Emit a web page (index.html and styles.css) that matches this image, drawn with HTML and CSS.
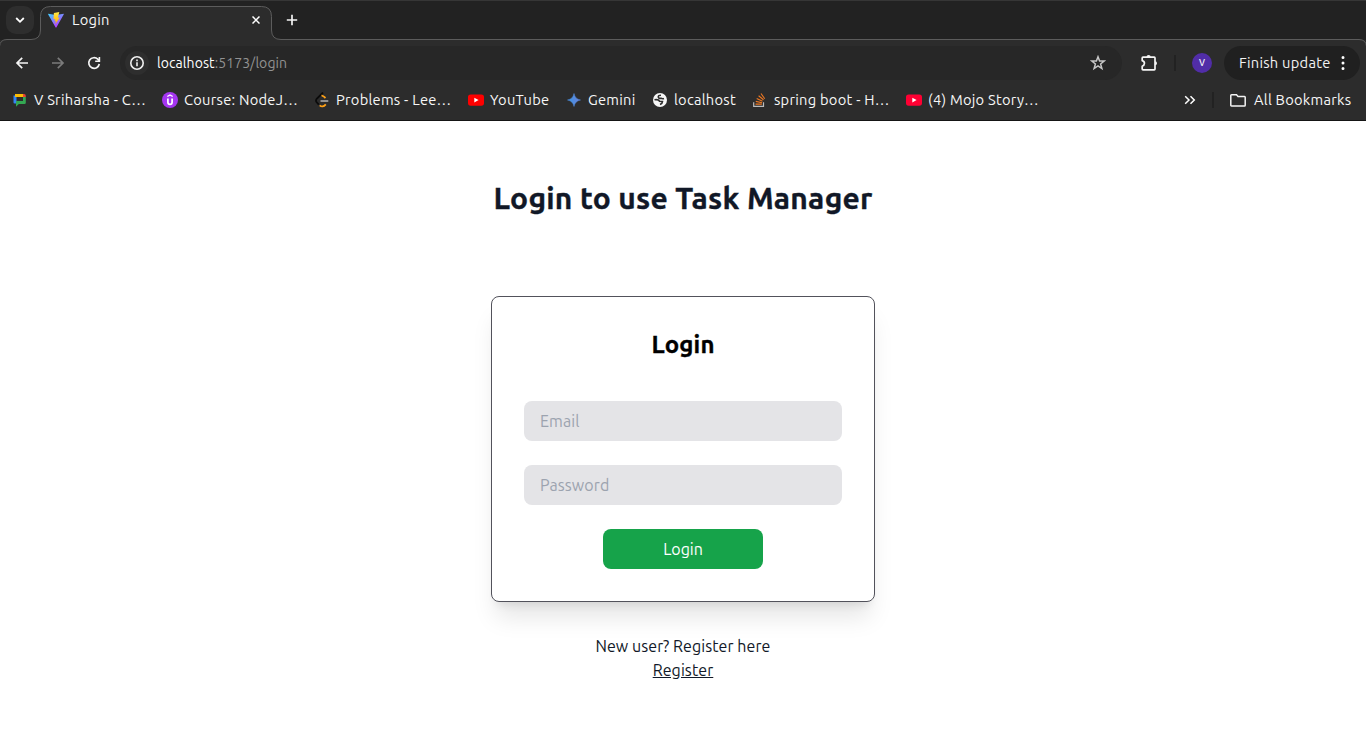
FILE: index.html
```html
<!DOCTYPE html>
<html lang="en">
<head>
<meta charset="utf-8">
<title>Login</title>
<link rel="stylesheet" href="styles.css">
</head>
<body>
<header class="browser">
  <div class="tabstrip">
    <button class="tab-search" aria-label="Search tabs"><svg width="10" height="10" viewBox="0 0 10 10"><path d="M1.2 3 5 6.800 8.800 3" fill="none" stroke="#fff" stroke-width="1.8"/></svg></button>
    <svg class="tab-shape" width="1366" height="47" viewBox="0 0 1366 47"><path d="M-.5 47V46.500Q0 39.500 7 39.500H31Q40.500 39.500 40.500 30V16.500Q40.500 6.500 50.500 6.500H261.500Q271.500 6.500 271.500 16.500V30Q271.500 39.500 281 39.500H1359Q1366 39.500 1366.500 46.500V47" fill="#2c2c2c" stroke="#5c5c5c"/></svg>
    <div class="tab">
      <svg width="16" height="16" viewBox="0 0 16 16"><defs><linearGradient id="va" x2=".6" y2="1"><stop stop-color="#41d1ff"/><stop offset="1" stop-color="#bd34fe"/></linearGradient><linearGradient id="vb" x2="0" y2="1"><stop stop-color="#ffea45"/><stop offset="1" stop-color="#ffa800"/></linearGradient></defs><path d="M.3 1.700 8 3 15.700 1.700Q16 2 15.700 2.500L8.500 15.300Q8 16 7.500 15.300L.2 2.500Q0 2 .3 1.700Z" fill="url(#va)"/><path d="M11.300 0 5.900 1.100 5.500 7.200 7.200 6.900 6.700 9.200 7.900 8.900 7.300 12.300 11.800 5.400 9.900 5.700Z" fill="url(#vb)"/></svg>
      <span class="tab-title">Login</span>
      <svg class="close" width="8" height="8" viewBox="0 0 8 8"><path d="M.5.5 7.500 7.500M7.500.5.5 7.500" stroke="#fff" stroke-width="1.500"/></svg>
    </div>
    <svg class="new-tab" width="12" height="12" viewBox="0 0 12 12"><path d="M6 .8V11.200M.8 6H11.200" stroke="#f4f4f4" stroke-width="1.700"/></svg>
  </div>
  <div class="toolbar">
    <div class="nav">
      <svg width="16" height="16" viewBox="0 0 16 16"><path d="M14 8H3.200M8.200 2.800 3 8 8.200 13.200" fill="none" stroke="#f5f5f5" stroke-width="1.700"/></svg>
      <svg width="16" height="16" viewBox="0 0 16 16"><path d="M2 8H12.800M7.800 2.800 13 8 7.800 13.200" fill="none" stroke="#7b7b7b" stroke-width="1.700"/></svg>
      <svg width="16" height="16" viewBox="0 0 16 16"><path d="M13.300 9A5.300 5.300 0 1 1 11.800 4.200L13 5.600" fill="none" stroke="#f5f5f5" stroke-width="1.700"/><path d="M14.200 2V7H9.200V5.400H12.600V2Z" fill="#f5f5f5"/></svg>
    </div>
    <div class="omnibox">
      <span class="site-info"><svg width="16" height="16" viewBox="0 0 16 16"><circle cx="8" cy="8" r="6.200" fill="none" stroke="#f0f0f0" stroke-width="1.600"/><path d="M8 7.200V11.300M8 4.600V6.200" stroke="#f0f0f0" stroke-width="1.600"/></svg></span>
      <span class="url">localhost<span class="path">:5173/login</span></span>
      <svg class="star" width="16" height="16" viewBox="0 0 16 16"><path d="M8 1.800 9.600 6H14.200L10.600 8.900 11.900 13.500 8 10.900 4.100 13.500 5.400 8.900 1.800 6H6.400Z" fill="none" stroke="#c7c7c7" stroke-width="1.500"/></svg>
    </div>
    <svg class="puzzle" width="18" height="18" viewBox="0 0 18 18"><path d="M3 3.200H14.200Q15 3.200 15 4V15Q15 15.800 14.200 15.800H3Q2.200 15.800 2.200 15V12.200C5.200 11.200 5.200 7.400 2.200 6.700V4Q2.200 3.200 3 3.200Z" fill="none" stroke="#f5f5f5" stroke-width="1.700" stroke-linejoin="round"/><path d="M6.500 3A2.100 2.100 0 0 1 10.700 3ZM15 7.300A2 2 0 0 1 15 11.300Z" fill="#f5f5f5"/></svg>
    <i class="divider toolbar-divider"></i>
    <span class="avatar">V</span>
    <button class="update"><span>Finish update</span><svg width="4" height="16" viewBox="0 0 4 16"><path d="M2 2.500V2.510M2 8V8.010M2 13.500V13.510" stroke="#fff" stroke-width="3" stroke-linecap="round"/></svg></button>
  </div>
  <nav class="bookmarks">
    <a class="bm w150 chat"><svg width="16" height="16" viewBox="0 0 16 16"><path d="M1.500 3.500H4.500V11.500H2.500Q1.500 11.500 1.500 10.500Z" fill="#3385f5"/><path d="M3 2H11V5H3Z" fill="#fbbc04"/><path d="M11 2H12Q13.800 2 13.800 4V5H11Z" fill="#e94235"/><path d="M11 5H13.800V10.700Q13.800 12 12.500 12H6.800L4 14.700V9H11Z" fill="#34a853"/></svg><span>V Sriharsha - C…</span></a>
    <a class="bm w152 course"><svg width="16" height="16" viewBox="0 0 16 16"><circle cx="8" cy="8" r="8" fill="#a435f0"/><path d="M5.300 4.500 8 3 10.700 4.500" fill="none" stroke="#fff" stroke-width="1.400"/><path d="M5.900 6.500V10.300Q5.900 12.400 8 12.400T10.100 10.300V6.500" fill="none" stroke="#fff" stroke-width="1.700"/></svg><span>Course: NodeJ…</span></a>
    <a class="bm w154 problems"><svg width="16" height="16" viewBox="0 0 16 16"><path d="M9 .5 2.700 6.800Q1.300 8.500 2.700 10.300L4.800 12.700" fill="none" stroke="#0b0b0b" stroke-width="1.800"/><path d="M7.500 3.700Q9 3.500 11.500 6M5.700 13.300Q8.500 16 11.800 12.300" fill="none" stroke="#ffa116" stroke-width="1.800"/><path d="M6.500 9H14.300" stroke="#b3b3b3" stroke-width="1.500"/></svg><span>Problems - Lee…</span></a>
    <a class="bm w98 youtube"><svg width="16" height="16" viewBox="0 0 16 16"><rect y="2.500" width="16" height="11.200" rx="2.600" fill="#f00"/><path d="M6.300 5.700V10.500L10.600 8.100Z" fill="#fff"/></svg><span>YouTube</span></a>
    <a class="bm w86 gemini"><svg width="16" height="16" viewBox="0 0 16 16"><defs><linearGradient id="ge"><stop stop-color="#3598e8"/><stop offset=".5" stop-color="#548bde"/><stop offset="1" stop-color="#7180dc"/></linearGradient></defs><path d="M8 1.500Q9 7 14.500 8 9 9 8 14.500 7 9 1.500 8 7 7 8 1.500Z" fill="url(#ge)" stroke="#518bdc" stroke-width=".5"/></svg><span>Gemini</span></a>
    <a class="bm w100 local"><svg width="16" height="16" viewBox="0 0 16 16"><circle cx="8" cy="8" r="7" fill="#f7f7f7"/><path d="M9 3.200Q6 3.200 6.300 5T9 6.300Q10.500 7 12 6.500M2.500 7.800Q6.500 7 7.500 9.200L10.500 9.500Q10.500 11.500 8 12.500" fill="none" stroke="#2c2c2c" stroke-width="1.600"/></svg><span>localhost</span></a>
    <a class="bm w154 spring"><svg width="16" height="16" viewBox="0 0 16 16"><path d="M1.700 10.300V14.300H11.500V10.300" fill="none" stroke="#bcbbbb" stroke-width="1.200"/><path d="M3.500 12.100H9.800M3.800 9.400 10 10.700M4.700 6.600 10.500 9.200M6.600 3.800 11.500 7.800M9 1.500 12.700 6.700" fill="none" stroke="#ef7822" stroke-width="1.100"/></svg><span>spring boot - H…</span></a>
    <a class="bm w134 mojo"><svg width="16" height="16" viewBox="0 0 16 16"><rect y="2.500" width="16" height="11.200" rx="2.600" fill="#ff0033"/><path d="M6.300 5.700V10.500L10.600 8.100Z" fill="#fff"/></svg><span>(4) Mojo Story…</span></a>
    <svg class="overflow" width="12" height="10" viewBox="0 0 12 10"><path d="M1.200 1.200 5 5 1.200 8.800M6.500 1.200 10.300 5 6.500 8.800" fill="none" stroke="#fff" stroke-width="1.500"/></svg>
    <i class="divider bookmark-divider"></i>
    <a class="bm all"><svg width="18" height="16" viewBox="0 0 18 16"><path d="M2.500 2.800H7.500L9 4.500H15.500Q16.200 4.500 16.200 5.300V13.200Q16.200 14 15.500 14H2.500Q1.800 14 1.800 13.200V3.500Q1.800 2.800 2.500 2.800Z" fill="none" stroke="#f3f3f3" stroke-width="1.500"/></svg><span>All Bookmarks</span></a>
  </nav>
</header>
<main class="page">
  <h1>Login to use Task Manager</h1>
  <form class="card">
    <h2>Login</h2>
    <input type="email" placeholder="Email" aria-label="Email">
    <input type="password" placeholder="Password" aria-label="Password">
    <button type="button" class="submit">Login</button>
  </form>
  <div class="register"><p>New user? Register here</p><a>Register</a></div>
</main>
</body>
</html>
```
FILE: styles.css
```css
* { box-sizing: border-box; margin: 0; }
body { font-family: "Ubuntu", "Noto Sans", sans-serif; background: #fff; overflow: hidden; }
svg { display: block; flex: none; }
button { border: 0; padding: 0; font: inherit; letter-spacing: inherit; }
.browser { height: 121px; background: #2c2c2c; color: #f7f7f7; border-bottom: 1px solid #151515; font-size: 14.667px; letter-spacing: .26px; white-space: nowrap; }
.tabstrip { position: relative; height: 40px; display: flex; align-items: center; background: #222; border-top: 1px solid #363636; padding: 0 0 1px 6px; }
.tab-shape { position: absolute; left: 0; top: -1px; }
.tab-search { width: 28px; height: 28px; border-radius: 10px; background: #2e2e2e; display: grid; place-items: center; }
.tab { position: relative; width: 232px; margin-left: 6px; padding: 0 12px 0 8px; display: flex; align-items: center; gap: 8px; }
.tab-title { flex: 1; }
.tab-title, .bm span, .update span { line-height: 16px; }
.new-tab { position: relative; margin-left: 14px; }
.toolbar { position: relative; height: 46px; display: flex; align-items: center; padding-left: 14px; }
.nav { display: flex; gap: 20px; width: 106px; }
.omnibox { width: 1002px; height: 34px; border-radius: 17px; background: #272727; display: flex; align-items: center; padding: 0 16px 0 5px; }
.site-info { width: 24px; height: 24px; border-radius: 50%; background: #2e2e2e; display: grid; place-items: center; }
.url { flex: 1; margin-left: 8px; font-size: 14px; letter-spacing: .08px; color: #fff; }
.path { color: #929292; }
.puzzle { margin: -1px 0 0 18px; }
.divider { width: 2px; height: 16px; background: #222; }
.toolbar-divider { margin-left: 16px; }
.avatar { width: 20px; height: 20px; margin-left: 16px; border-radius: 50%; background: #512da8; display: grid; place-items: center; font-size: 9px; font-weight: 500; letter-spacing: 0; }
.update { height: 34px; width: 136px; margin-left: 12px; border-radius: 17px; background: #202020; color: #f2f2f2; display: flex; align-items: center; justify-content: space-between; padding: 0 15px; }
.bookmarks { display: flex; align-items: center; height: 28px; padding-left: 12px; }
.bm { display: flex; align-items: center; gap: 6px; flex: none; }
.w150 { width: 150px; }
.w152 { width: 152px; }
.w154 { width: 154px; }
.w98 { width: 98px; }
.w86 { width: 86px; }
.w100 { width: 100px; }
.w134 { width: 134px; }
.overflow { margin-left: 144px; }
.bookmark-divider { margin-left: 16px; }
.all { margin-left: 15px; gap: 7px; }
.page { display: flex; flex-direction: column; align-items: center; padding-top: 59px; color: #111827; line-height: 24px; }
h1, h2 { -webkit-text-stroke: .35px currentColor; }
h1 { font-size: 30px; line-height: 36px; font-weight: 700; letter-spacing: .23px; white-space: nowrap; }
.card { width: 384px; height: 306px; margin-top: 80px; padding: 32px 31px 31px; border: 1px solid #52525b; border-radius: 8px; background: #fff; box-shadow: 0 20px 25px -5px rgba(0,0,0,.1), 0 8px 10px -6px rgba(0,0,0,.1); display: flex; flex-direction: column; align-items: center; }
h2 { color: #000; font-size: 24px; line-height: 32px; letter-spacing: .15px; }
input { width: 318px; height: 40px; border: 0; border-radius: 8px; background: #e4e4e7; padding: 8px 16px; font: 16px/24px "Ubuntu", "Noto Sans", sans-serif; letter-spacing: .08px; }
input::placeholder { color: #9ca3af; opacity: 1; }
h2 + input { margin-top: 40px; }
input + input, .submit { margin-top: 24px; }
.submit { width: 160px; height: 40px; border-radius: 8px; background: #16a34a; color: #fff; font-size: 16px; }
.register { margin-top: 32px; text-align: center; letter-spacing: .08px; }
.register a { text-decoration: underline; }
```
